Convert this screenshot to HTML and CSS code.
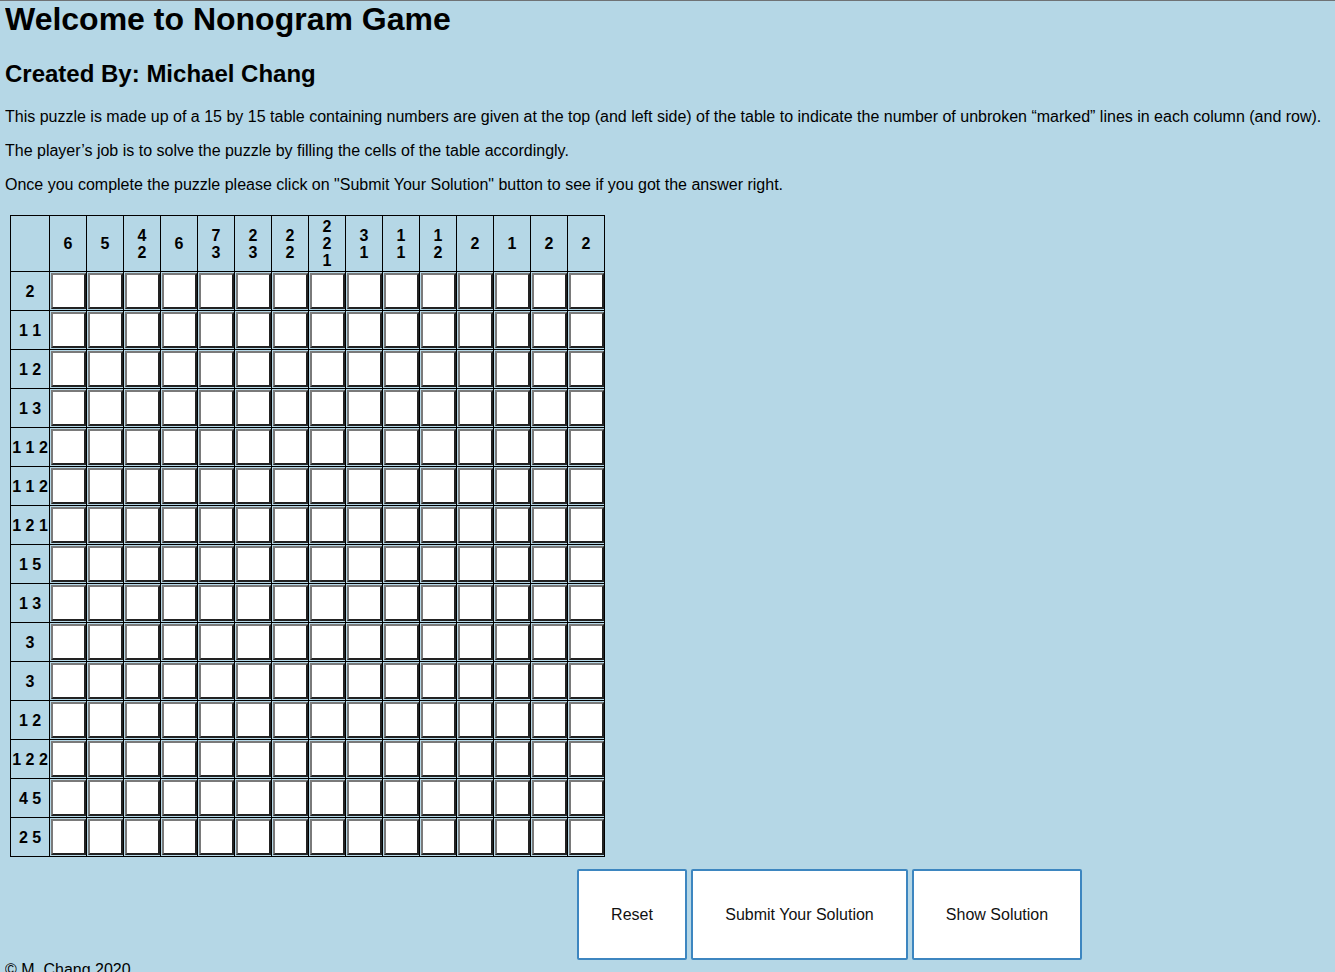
FILE: index.html
```html
<!DOCTYPE html>
<html lang="en">
<head>
<meta charset="utf-8">
<title>Nonogram Game</title>
<link rel="stylesheet" href="styles.css">
</head>
<body>
<h1 class="title">Welcome to Nonogram Game</h1>
<h2 class="author">Created By: Michael Chang</h2>
<p class="intro">This puzzle is made up of a 15 by 15 table containing numbers are given at the top (and left side) of the table to indicate the number of unbroken “marked” lines in each column (and row).</p>
<p class="intro">The player’s job is to solve the puzzle by filling the cells of the table accordingly.</p>
<p class="intro">Once you complete the puzzle please click on "Submit Your Solution" button to see if you got the answer right.</p>

<table class="board">
<thead>
<tr>
<th class="corner"></th>
<th class="col">6</th>
<th class="col">5</th>
<th class="col">4<br>2</th>
<th class="col">6</th>
<th class="col">7<br>3</th>
<th class="col">2<br>3</th>
<th class="col">2<br>2</th>
<th class="col">2<br>2<br>1</th>
<th class="col">3<br>1</th>
<th class="col">1<br>1</th>
<th class="col">1<br>2</th>
<th class="col">2</th>
<th class="col">1</th>
<th class="col">2</th>
<th class="col">2</th>
</tr>
</thead>
<tbody>
<tr><th class="row">2</th><td><span class="box"></span></td><td><span class="box"></span></td><td><span class="box"></span></td><td><span class="box"></span></td><td><span class="box"></span></td><td><span class="box"></span></td><td><span class="box"></span></td><td><span class="box"></span></td><td><span class="box"></span></td><td><span class="box"></span></td><td><span class="box"></span></td><td><span class="box"></span></td><td><span class="box"></span></td><td><span class="box"></span></td><td><span class="box"></span></td></tr>
<tr><th class="row">1 1</th><td><span class="box"></span></td><td><span class="box"></span></td><td><span class="box"></span></td><td><span class="box"></span></td><td><span class="box"></span></td><td><span class="box"></span></td><td><span class="box"></span></td><td><span class="box"></span></td><td><span class="box"></span></td><td><span class="box"></span></td><td><span class="box"></span></td><td><span class="box"></span></td><td><span class="box"></span></td><td><span class="box"></span></td><td><span class="box"></span></td></tr>
<tr><th class="row">1 2</th><td><span class="box"></span></td><td><span class="box"></span></td><td><span class="box"></span></td><td><span class="box"></span></td><td><span class="box"></span></td><td><span class="box"></span></td><td><span class="box"></span></td><td><span class="box"></span></td><td><span class="box"></span></td><td><span class="box"></span></td><td><span class="box"></span></td><td><span class="box"></span></td><td><span class="box"></span></td><td><span class="box"></span></td><td><span class="box"></span></td></tr>
<tr><th class="row">1 3</th><td><span class="box"></span></td><td><span class="box"></span></td><td><span class="box"></span></td><td><span class="box"></span></td><td><span class="box"></span></td><td><span class="box"></span></td><td><span class="box"></span></td><td><span class="box"></span></td><td><span class="box"></span></td><td><span class="box"></span></td><td><span class="box"></span></td><td><span class="box"></span></td><td><span class="box"></span></td><td><span class="box"></span></td><td><span class="box"></span></td></tr>
<tr><th class="row">1 1 2</th><td><span class="box"></span></td><td><span class="box"></span></td><td><span class="box"></span></td><td><span class="box"></span></td><td><span class="box"></span></td><td><span class="box"></span></td><td><span class="box"></span></td><td><span class="box"></span></td><td><span class="box"></span></td><td><span class="box"></span></td><td><span class="box"></span></td><td><span class="box"></span></td><td><span class="box"></span></td><td><span class="box"></span></td><td><span class="box"></span></td></tr>
<tr><th class="row">1 1 2</th><td><span class="box"></span></td><td><span class="box"></span></td><td><span class="box"></span></td><td><span class="box"></span></td><td><span class="box"></span></td><td><span class="box"></span></td><td><span class="box"></span></td><td><span class="box"></span></td><td><span class="box"></span></td><td><span class="box"></span></td><td><span class="box"></span></td><td><span class="box"></span></td><td><span class="box"></span></td><td><span class="box"></span></td><td><span class="box"></span></td></tr>
<tr><th class="row">1 2 1</th><td><span class="box"></span></td><td><span class="box"></span></td><td><span class="box"></span></td><td><span class="box"></span></td><td><span class="box"></span></td><td><span class="box"></span></td><td><span class="box"></span></td><td><span class="box"></span></td><td><span class="box"></span></td><td><span class="box"></span></td><td><span class="box"></span></td><td><span class="box"></span></td><td><span class="box"></span></td><td><span class="box"></span></td><td><span class="box"></span></td></tr>
<tr><th class="row">1 5</th><td><span class="box"></span></td><td><span class="box"></span></td><td><span class="box"></span></td><td><span class="box"></span></td><td><span class="box"></span></td><td><span class="box"></span></td><td><span class="box"></span></td><td><span class="box"></span></td><td><span class="box"></span></td><td><span class="box"></span></td><td><span class="box"></span></td><td><span class="box"></span></td><td><span class="box"></span></td><td><span class="box"></span></td><td><span class="box"></span></td></tr>
<tr><th class="row">1 3</th><td><span class="box"></span></td><td><span class="box"></span></td><td><span class="box"></span></td><td><span class="box"></span></td><td><span class="box"></span></td><td><span class="box"></span></td><td><span class="box"></span></td><td><span class="box"></span></td><td><span class="box"></span></td><td><span class="box"></span></td><td><span class="box"></span></td><td><span class="box"></span></td><td><span class="box"></span></td><td><span class="box"></span></td><td><span class="box"></span></td></tr>
<tr><th class="row">3</th><td><span class="box"></span></td><td><span class="box"></span></td><td><span class="box"></span></td><td><span class="box"></span></td><td><span class="box"></span></td><td><span class="box"></span></td><td><span class="box"></span></td><td><span class="box"></span></td><td><span class="box"></span></td><td><span class="box"></span></td><td><span class="box"></span></td><td><span class="box"></span></td><td><span class="box"></span></td><td><span class="box"></span></td><td><span class="box"></span></td></tr>
<tr><th class="row">3</th><td><span class="box"></span></td><td><span class="box"></span></td><td><span class="box"></span></td><td><span class="box"></span></td><td><span class="box"></span></td><td><span class="box"></span></td><td><span class="box"></span></td><td><span class="box"></span></td><td><span class="box"></span></td><td><span class="box"></span></td><td><span class="box"></span></td><td><span class="box"></span></td><td><span class="box"></span></td><td><span class="box"></span></td><td><span class="box"></span></td></tr>
<tr><th class="row">1 2</th><td><span class="box"></span></td><td><span class="box"></span></td><td><span class="box"></span></td><td><span class="box"></span></td><td><span class="box"></span></td><td><span class="box"></span></td><td><span class="box"></span></td><td><span class="box"></span></td><td><span class="box"></span></td><td><span class="box"></span></td><td><span class="box"></span></td><td><span class="box"></span></td><td><span class="box"></span></td><td><span class="box"></span></td><td><span class="box"></span></td></tr>
<tr><th class="row">1 2 2</th><td><span class="box"></span></td><td><span class="box"></span></td><td><span class="box"></span></td><td><span class="box"></span></td><td><span class="box"></span></td><td><span class="box"></span></td><td><span class="box"></span></td><td><span class="box"></span></td><td><span class="box"></span></td><td><span class="box"></span></td><td><span class="box"></span></td><td><span class="box"></span></td><td><span class="box"></span></td><td><span class="box"></span></td><td><span class="box"></span></td></tr>
<tr><th class="row">4 5</th><td><span class="box"></span></td><td><span class="box"></span></td><td><span class="box"></span></td><td><span class="box"></span></td><td><span class="box"></span></td><td><span class="box"></span></td><td><span class="box"></span></td><td><span class="box"></span></td><td><span class="box"></span></td><td><span class="box"></span></td><td><span class="box"></span></td><td><span class="box"></span></td><td><span class="box"></span></td><td><span class="box"></span></td><td><span class="box"></span></td></tr>
<tr><th class="row">2 5</th><td><span class="box"></span></td><td><span class="box"></span></td><td><span class="box"></span></td><td><span class="box"></span></td><td><span class="box"></span></td><td><span class="box"></span></td><td><span class="box"></span></td><td><span class="box"></span></td><td><span class="box"></span></td><td><span class="box"></span></td><td><span class="box"></span></td><td><span class="box"></span></td><td><span class="box"></span></td><td><span class="box"></span></td><td><span class="box"></span></td></tr>
</tbody>
</table>

<div class="actions">
<button class="action" type="button">Reset</button>
<button class="action action-submit" type="button">Submit Your Solution</button>
<button class="action action-show" type="button">Show Solution</button>
</div>

<p class="footer">© M. Chang 2020</p>
</body>
</html>
```

FILE: styles.css
```css
html {
  background: #b5d7e6;
  border-top: 1px solid #6f7275;
}

body {
  margin: 0 5px;
  font-family: "Liberation Sans", Arial, sans-serif;
  color: #000;
}

.title {
  margin: 0 0 22px;
  font-size: 32px;
  font-weight: bold;
}

.author {
  margin: 0 0 20px;
  font-size: 24px;
  font-weight: bold;
}

.intro {
  margin: 0 0 16px;
  font-size: 16px;
}

.board {
  border-collapse: collapse;
  margin: 21px 0 0 5px;
}

.board th,
.board td {
  border: 1px solid #000;
  padding: 0;
}

.board th {
  font-size: 16px;
  font-weight: bold;
  line-height: 17px;
  text-align: center;
  vertical-align: middle;
}

.corner,
.row {
  width: 38px;
  white-space: nowrap;
}

.col {
  width: 36px;
  height: 55px;
  padding-bottom: 1px;
}

.board td {
  padding: 1px 0 0 1px;
  width: 35px;
  height: 37px;
  vertical-align: top;
}

.box {
  display: block;
  box-sizing: border-box;
  width: 35px;
  height: 36px;
  background: #fff;
  border: 2px solid;
  border-color: #7a7a7a #222 #222 #7a7a7a;
}

.actions {
  display: flex;
  gap: 4px;
  margin: 12px 0 0 572px;
}

.action {
  box-sizing: border-box;
  height: 91px;
  font-family: "Liberation Sans", Arial, sans-serif;
  font-size: 16px;
  line-height: 18px;
  color: #111;
  background: #fff;
  border: 2px solid #3d86c0;
  border-radius: 2px;
  padding: 0;
}

.action:first-child {
  width: 110px;
}

.action-submit {
  width: 217px;
}

.action-show {
  width: 170px;
}

.footer {
  margin: 1px 0 0;
  font-size: 16px;
}
```
